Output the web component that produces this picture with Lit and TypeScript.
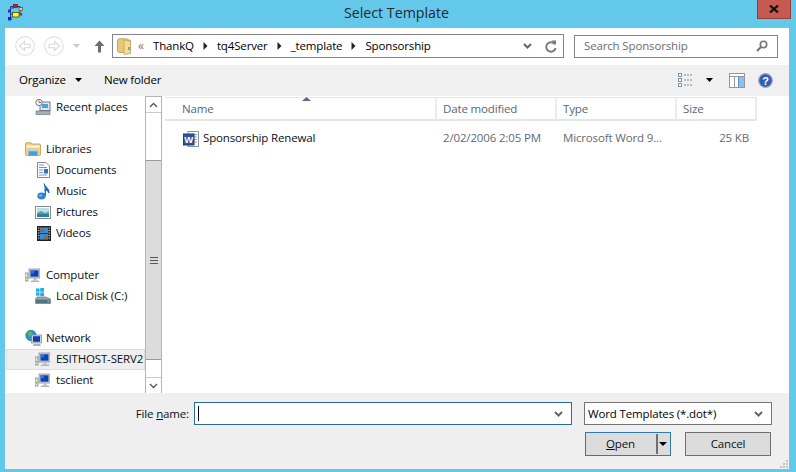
import { LitElement, html, css, svg } from "lit";
import { customElement } from "lit/decorators.js";

const ic = (w: number, h: number, body: unknown, cls = "") =>
  html`<svg class="ic ${cls}" width=${w} height=${h} viewBox="0 0 ${w} ${h}">${body}</svg>`;

const appIcon = ic(16, 17, svg`
  <path d="M7 2.5H3.5V14.5M7 4H4M4 10H8M13 7V10M9 2.5H13V5" fill="none" stroke="#1f3f8f" stroke-width="1"/>
  <rect x="6.5" y="0.5" width="4" height="3" fill="#e01010" stroke="#501010" stroke-width=".6"/>
  <rect x="12" y="3.5" width="3.4" height="3" fill="#f2e020" stroke="#333" stroke-width=".6"/>
  <rect x="5.5" y="8.5" width="6.5" height="4.5" fill="#ffff00" stroke="#333" stroke-width=".7"/>
  <rect x="1" y="5.5" width="3" height="3" fill="#1f2fc0"/>
  <rect x="1" y="13" width="3.4" height="3.4" fill="#1020c8"/>
  <rect x="12.5" y="9" width="2.6" height="2.6" fill="#d01818"/>`);

const navCircle = (flip: boolean) => ic(20, 20, svg`
  <circle cx="10" cy="10" r="9.3" fill="#fff" stroke="#e2e2e2" stroke-width="1.2"/>
  <path d="${flip ? "M5 8.3H10.5V5.5L15.5 10L10.5 14.5V11.7H5Z" : "M15 8.3H9.5V5.5L4.5 10L9.5 14.5V11.7H15Z"}" fill="#fff" stroke="#d9d9d9" stroke-width="1.1"/>`);

const folderTall = ic(14, 17, svg`
  <path d="M0.5 3C0.5 1.5 1.5 .8 3 .8H9L13.5 2.5V14.5H3C1.5 14.5 .5 14 .5 12.5Z" fill="#e5c878" stroke="#b89a4c" stroke-width=".8"/>
  <path d="M7 2.2L13.5 3.2V15.5L7 16.5Z" fill="#f2dc97" stroke="#c4a65a" stroke-width=".8"/>
  <rect x="11" y="9" width="2" height="3" fill="#6aa5d8"/>`);

const crumbArrow = ic(5, 8, svg`<path d="M0.5 0L4.5 4L0.5 8Z" fill="#222"/>`);

const chevron = (c = "#666") => ic(9, 6, svg`<path d="M1 1L4.5 4.5L8 1" fill="none" stroke="${c}" stroke-width="2"/>`);

const refresh = ic(12, 13, svg`<path d="M9.8 4.2A4.7 4.7 0 1 0 10.6 8" fill="none" stroke="#7a7a7a" stroke-width="1.9"/><path d="M6.6 0.5L11 .5V5Z" fill="#7a7a7a"/>`);

const magnifier = ic(12, 12, svg`<circle cx="7.5" cy="4.5" r="3.2" fill="none" stroke="#777" stroke-width="1.6"/><path d="M5 7L1 11" stroke="#777" stroke-width="2.2"/>`);

const upArrow = ic(11, 13, svg`<path d="M5.5 0.5L10.5 6H7V12.5H4V6H.5Z" fill="#6d6d6d"/>`);

const caret = (w = 7, c = "#000") => ic(w, 4, svg`<path d="M0 0H${w}L${w / 2} 4Z" fill="${c}"/>`);

const viewIcon = ic(15, 14, svg`
  <g fill="#fff" stroke="#8294a8" stroke-width="1">
    <rect x=".5" y=".5" width="3" height="3"/><rect x=".5" y="5.5" width="3" height="3"/><rect x=".5" y="10.5" width="3" height="3"/>
  </g>
  <path d="M6 2H15M6 7H15M6 12H15" stroke="#7a8794" stroke-width="1" stroke-dasharray="2 1"/>`);

const paneIcon = ic(16, 15, svg`
  <rect x=".5" y=".5" width="15" height="14" fill="#fff" stroke="#8f98a0"/>
  <path d="M.5 3.5H15.5M5.5 3.5V14.5" stroke="#8f98a0" fill="none"/>
  <rect x="9" y="4" width="6" height="10" fill="#8cc0ee"/>
  <rect x="9" y="4" width="1" height="10" fill="#5d8fc0"/>`);

const helpIcon = ic(15, 15, svg`
  <circle cx="7.5" cy="7.5" r="6.8" fill="#2f5fb8" stroke="#9aa6b8" stroke-width="1.2"/>
  <text x="7.5" y="11.5" text-anchor="middle" font-family="Liberation Sans" font-weight="700" font-size="11" fill="#fff">?</text>`);

const recent = ic(16, 16, svg`
  <rect x="5" y="3" width="10" height="8.5" fill="#dfe6ee" stroke="#6e7a88"/>
  <rect x="7" y="5" width="6" height="4" fill="#5b9bd5"/>
  <circle cx="4" cy="3.5" r="3.2" fill="#f4f4f4" stroke="#777"/>
  <path d="M4 1.5V3.5H6" stroke="#555" fill="none" stroke-width=".8"/>
  <rect x="1" y="12" width="14" height="3.5" fill="#a9b0b8" stroke="#6e7a88" stroke-width=".7"/>`);

const libraries = ic(16, 14, svg`
  <path d="M.5 3V12.5C.5 13.2 1 13.5 1.5 13.5H14.5C15.2 13.5 15.5 13 15.5 12.5V3C15.5 2.3 15 2 14.5 2H7L6 .8H1.5C1 .8 .5 1.2 .5 2Z" fill="#eed28a" stroke="#bfa35a" stroke-width=".9"/>
  <rect x="1.5" y="3.5" width="13" height="2" fill="#fff5d0"/>
  <path d="M3.5 13.5V9.5C3.5 8.5 4 8 5 8H11C12 8 12.5 8.5 12.5 9.5V13.5Z" fill="#4f9bd9"/>
  <rect x="3.5" y="7.3" width="9" height="2" fill="#a9d6f5"/>`);

const documents = ic(13, 16, svg`
  <path d="M.5 .5H9L12.5 4V15.5H.5Z" fill="#fff" stroke="#7f8a99"/>
  <path d="M2 3H7M2 5.5H10M2 8H6M2 10.5H6M2 13H10" stroke="#7b95bd" stroke-width="1"/>
  <rect x="7" y="7" width="4" height="4.5" fill="#2f72b8"/>`);

const music = ic(13, 17, svg`
  <path d="M7 0.5C7.5 4 12.5 5 12 10C11.5 7.5 9.5 6.8 8.3 6.6V13" fill="#2a78c2" stroke="#1f67ad" stroke-width="1.2"/>
  <ellipse cx="4.5" cy="13" rx="4.2" ry="3.4" fill="#2e86d4"/>
  <ellipse cx="3.5" cy="12.4" rx="1.6" ry="1" fill="#7fc0ee"/>`);

const pictures = ic(16, 13, svg`
  <rect x=".5" y=".5" width="15" height="12" fill="#fff" stroke="#85898e"/>
  <rect x="2" y="2" width="12" height="9" fill="#bcdcef"/>
  <path d="M2 7L6 5L10 7L14 5.5V8H2Z" fill="#6aa36a"/>
  <rect x="2" y="8" width="12" height="3" fill="#2a7db5"/>`);

const videos = ic(14, 15, svg`
  <rect x=".5" y=".5" width="13" height="14" fill="#23363f" stroke="#1a1f22"/>
  <rect x="3" y="1.5" width="8" height="5.5" fill="#3b8dd8"/>
  <rect x="3" y="8" width="8" height="5.5" fill="#3b8dd8"/>
  <path d="M3 4L6 2L8 6H3ZM6 13L9 9L11 13Z" fill="#8a6a40"/>
  <path d="M1.2 2H2.3M1.2 4.5H2.3M1.2 7H2.3M1.2 9.5H2.3M1.2 12H2.3M11.7 2H12.8M11.7 4.5H12.8M11.7 7H12.8M11.7 9.5H12.8M11.7 12H12.8" stroke="#e8e8e8" stroke-width="1.1"/>`);

const pc = ic(15, 14, svg`
  <rect x="0" y="5" width="3" height="8" fill="#dfe3da" stroke="#708070" stroke-width=".7"/>
  <rect x=".8" y="9" width="1.4" height="1.4" fill="#56b848"/>
  <rect x="4" y="1" width="11" height="9" fill="#ccd3da" stroke="#7f8790" stroke-width=".7"/>
  <rect x="5.5" y="2.3" width="8" height="6.4" fill="#123fb0"/>
  <rect x="5.5" y="2.3" width="3.5" height="3" fill="#2c7ae0"/>
  <path d="M6.5 12.5H13.5L14.5 14H5.5Z" fill="#aab2ba"/><rect x="8.5" y="10" width="3" height="2.5" fill="#b8c0c8"/>`);

const disk = ic(16, 16, svg`
  <rect x="1" y="0.5" width="3.6" height="3.3" fill="#19b1ef"/><rect x="5.2" y="0" width="3.8" height="3.8" fill="#19b1ef"/>
  <rect x="1" y="4.4" width="3.6" height="3.3" fill="#19b1ef"/><rect x="5.2" y="4.4" width="3.8" height="3.8" fill="#19b1ef"/>
  <path d="M2 9H11L15.5 11V15.5H.5V11Z" fill="#9ca6ae" stroke="#6e7780" stroke-width=".7"/>
  <rect x="1" y="11.5" width="14" height="3.5" fill="#4e7488"/>
  <rect x="12.5" y="12.5" width="1.6" height="1.4" fill="#7fe05a"/>`);

const network = ic(17, 16, svg`
  <circle cx="6" cy="5.5" r="5.2" fill="#2e97c8" stroke="#1a6f98" stroke-width=".7"/>
  <path d="M3 2.5L6.5 1.5L7 4.5L4 6.5ZM6 8L9 6.5L8 10Z" fill="#6dbb45"/>
  <rect x="6.5" y="5" width="10" height="8" fill="#ccd3da" stroke="#7f8790" stroke-width=".7"/>
  <rect x="8" y="6.2" width="7" height="5.6" fill="#123fb0"/>
  <path d="M8.5 14H15L16 16H8Z" fill="#aab2ba"/>`);

const word = ic(16, 16, svg`
  <rect x="5" y=".5" width="10.5" height="15" fill="#fff" stroke="#8a96a8"/>
  <path d="M11 3.5H14M11 6H14M11 8.5H14M11 11H14" stroke="#8aa0c8"/>
  <rect x=".5" y="3" width="10.5" height="11" fill="#2a579a" stroke="#1c3f78"/>
  <text x="5.7" y="12" text-anchor="middle" font-family="Liberation Sans" font-weight="700" font-size="9.5" fill="#fff">W</text>`);

const grip = ic(8, 8, svg`<g fill="#c4c4c4"><rect x="6" y="0" width="2" height="2"/><rect x="3" y="3" width="2" height="2"/><rect x="6" y="3" width="2" height="2"/><rect x="0" y="6" width="2" height="2"/><rect x="3" y="6" width="2" height="2"/><rect x="6" y="6" width="2" height="2"/></g>`);

type Row = { icon?: unknown; label?: string; level?: number; sel?: boolean; narrow?: boolean };
const tree: Row[] = [
  { icon: recent, label: "Recent places", level: 1 },
  {},
  { icon: libraries, label: "Libraries", level: 0 },
  { icon: documents, label: "Documents", level: 1, narrow: true },
  { icon: music, label: "Music", level: 1, narrow: true },
  { icon: pictures, label: "Pictures", level: 1 },
  { icon: videos, label: "Videos", level: 1, narrow: true },
  {},
  { icon: pc, label: "Computer", level: 0 },
  { icon: disk, label: "Local Disk (C:)", level: 1 },
  {},
  { icon: network, label: "Network", level: 0 },
  { icon: pc, label: "ESITHOST-SERV2", level: 1, sel: true },
  { icon: pc, label: "tsclient", level: 1 },
];

@customElement("app-root")
export class AppRoot extends LitElement {
  static styles = css`
    :host {
      display: block; width: 796px; height: 472px; overflow: hidden; position: relative;
      background: #63c8ea; color: #000;
      font: 11.5px/16px "Open Sans", "Noto Sans", sans-serif; letter-spacing: -0.15px;
    }
    * { box-sizing: border-box; }
    .ic { display: block; flex: none; }
    .title { height: 28px; display: flex; align-items: center; justify-content: center; font-size: 14.2px; letter-spacing: 0; padding: 0 3px 3px 0; color: #1c2a30; }
    .appicon { position: absolute; left: 7px; top: 4px; }
    .close { position: absolute; left: 757px; top: 0; width: 34px; height: 19px; background: #c75a50; border: 1px solid #8e4038; border-top: 0; display: flex; align-items: center; justify-content: center; }
    .client { margin: 0 7px 3px 5px; height: 441px; background: #fff; display: flex; flex-direction: column; }

    .nav { height: 37px; flex: none; display: flex; align-items: center; padding: 0 11px 1px 10px; }
    .navback { margin-right: 9px; }
    .navdrop { margin: 0 0 0 9px; }
    .navup { margin: 0 7px 0 14px; }
    .addr { width: 452px; height: 24px; border: 1px solid #848484; display: flex; align-items: center; padding-left: 4px; margin-right: 10px; }
    .chev { color: #777; margin: 0 6px 0 7px; letter-spacing: -1px; font-size: 12px; width: 9px; }
    .crumb { margin-right: 9px; padding-bottom: 1px; }
    .sep { margin-right: 9px; }
    .addr .end { margin-left: auto; display: flex; align-items: center; gap: 13px; padding-right: 6px; }
    .search { width: 204px; height: 23px; border: 1px solid #848484; display: flex; align-items: center; justify-content: space-between; padding: 0 9px; color: #6d6d6d; }

    .tools { height: 31px; flex: none; background: #f0f0f0; display: flex; align-items: center; padding: 0 16px 1px 14px; }
    .tools .org { display: flex; align-items: center; gap: 9px; margin-right: 22px; }
    .tools .right { margin-left: auto; display: flex; align-items: center; }
    .tools .right .c1 { margin: 0 16px 0 13px; }
    .tools .right .c2 { margin-right: 13px; }

    .main { height: 297px; flex: none; display: flex; }
    .side { width: 140px; flex: none; padding: 1px 0 0 0; overflow: hidden; }
    .row { height: 21px; display: flex; align-items: center; white-space: nowrap; color: #0a1020; border: 1px solid transparent; margin-left: 1px; width: 139px; overflow: hidden; padding-bottom: 1px; }
    .row.sel { background: #efefef; border-color: #dedede; }
    .slot { width: 21px; flex: none; display: flex; justify-content: flex-start; }
    .slot.narrow { padding-left: 2px; }
    .l0 { padding-left: 18px; }
    .l1 { padding-left: 28px; }
    .bar { width: 17px; flex: none; border: 1px solid #b5b5b5; border-width: 1px 1px 0; display: flex; flex-direction: column; background: #fff; }
    .bbtn { height: 16px; flex: none; display: flex; align-items: center; justify-content: center; border-bottom: 1px solid #c8c8c8; }
    .bbtn.dn { border-top: 1px solid #c8c8c8; border-bottom: 0; }
    .gap1 { height: 47px; flex: none; }
    .gap2 { flex: 1; }
    .thumb { height: 200px; flex: none; background: #dcdcdc; border: solid #9b9b9b; border-width: 1px 0; display: flex; align-items: center; justify-content: center; }
    .gr { width: 8px; height: 7px; border: solid #555; border-width: 1px 0; position: relative; }
    .gr::after { content: ""; position: absolute; left: 0; right: 0; top: 2px; height: 1px; background: #555; }

    .list { flex: 1; padding: 1px 32px 0 3px; color: #5f6a76; position: relative; }
    .cols { display: grid; grid-template-columns: 272px 120px 120px 80px; height: 24px; border: solid #e6e6e6; border-width: 1px 0 2px; color: #55677c; }
    .cols > div { padding: 1px 0 0 6px; border-right: 2px solid #ececec; line-height: 19px; }
    .cols > div:first-child { padding-left: 17px; }
    .sort { position: absolute; left: 140px; top: 1px; }
    .file { display: grid; grid-template-columns: 272px 120px 120px 80px; height: 34px; align-items: center; }
    .file .nm { display: flex; align-items: center; gap: 4px; padding-left: 18px; color: #0a1020; }
    .file .nm .ic { margin-top: 1px; }
    .file .d { padding-left: 6px; white-space: nowrap; }
    .file .s { text-align: right; padding-right: 8px; }

    .foot { flex: 1; background: #efefef; padding: 9px 17px 0 0; position: relative; }
    .f1 { display: flex; justify-content: flex-end; align-items: center; height: 23px; }
    .f1 label { margin-right: 5px; color: #0a1020; }
    u { text-underline-offset: 1px; }
    .fin { width: 378px; height: 23px; border: 1px solid #2b6a9c; background: #fff; margin-right: 12px; display: flex; align-items: center; justify-content: space-between; padding: 0 8px 0 3px; }
    .cursor { width: 1px; height: 15px; background: #000; }
    .sel2 { width: 188px; height: 23px; border: 1px solid #757575; background: #fff; display: flex; align-items: center; justify-content: space-between; padding: 0 8px 0 3px; white-space: nowrap; }
    .f2 { display: flex; justify-content: flex-end; gap: 14px; margin-top: 7px; padding-right: 1px; }
    .btn { width: 86px; height: 24px; background: #dcdcdc; border: 1px solid #707070; display: flex; align-items: center; justify-content: center; color: #0a1020; }
    .btn.def { border-color: #2f79ad; position: relative; padding-right: 15px; }
    .split { position: absolute; right: 12px; top: 1px; bottom: 1px; width: 2px; background: #707070; }
    .dcar { position: absolute; right: 3px; top: 9px; }
    .grip { position: absolute; right: 1px; bottom: 1px; }
  `;

  render() {
    return html`
      <div class="title">Select Template</div>
      <div class="appicon">${appIcon}</div>
      <div class="close">
        <svg width="10" height="8" viewBox="0 0 10 8"><path d="M1 0.5L9 7.5M9 0.5L1 7.5" stroke="#111" stroke-width="2.2"/></svg>
      </div>
      <div class="client">
        <div class="nav">
          <span class="navback">${navCircle(false)}</span>
          ${navCircle(true)}
          <span class="navdrop">${caret(7, "#c9c9c9")}</span>
          <span class="navup">${upArrow}</span>
          <div class="addr">
            ${folderTall}
            <span class="chev">«</span>
            <span class="crumb">ThankQ</span><span class="sep">${crumbArrow}</span>
            <span class="crumb">tq4Server</span><span class="sep">${crumbArrow}</span>
            <span class="crumb">_template</span><span class="sep">${crumbArrow}</span>
            <span class="crumb">Sponsorship</span>
            <span class="end">${chevron()}${refresh}</span>
          </div>
          <div class="search"><span>Search Sponsorship</span>${magnifier}</div>
        </div>
        <div class="tools">
          <span class="org">Organize ${caret()}</span>
          <span>New folder</span>
          <span class="right">
            ${viewIcon}<span class="c1">${caret()}</span><span class="c2">${paneIcon}</span>${helpIcon}
          </span>
        </div>
        <div class="main">
          <div class="side">
            ${tree.map((r) => r.label
              ? html`<div class="row l${r.level} ${r.sel ? "sel" : ""}"><span class="slot ${r.narrow ? "narrow" : ""}">${r.icon}</span><span>${r.label}</span></div>`
              : html`<div class="row"></div>`)}
          </div>
          <div class="bar">
            <div class="bbtn"><svg width="9" height="6" viewBox="0 0 9 6"><path d="M1 5L4.5 1.5L8 5" fill="none" stroke="#555" stroke-width="1.3"/></svg></div>
            <div class="gap1"></div>
            <div class="thumb"><div class="gr"></div></div>
            <div class="gap2"></div>
            <div class="bbtn dn"><svg width="9" height="6" viewBox="0 0 9 6"><path d="M1 1L4.5 4.5L8 1" fill="none" stroke="#555" stroke-width="1.3"/></svg></div>
          </div>
          <div class="list">
            <div class="sort">${ic(9, 4, svg`<path d="M0 4L4.5 0L9 4Z" fill="#5a6b80"/>`)}</div>
            <div class="cols"><div>Name</div><div>Date modified</div><div>Type</div><div>Size</div></div>
            <div class="file">
              <div class="nm">${word}<span>Sponsorship Renewal</span></div>
              <div class="d">2/02/2006 2:05 PM</div>
              <div class="d">Microsoft Word 9...</div>
              <div class="s">25 KB</div>
            </div>
          </div>
        </div>
        <div class="foot">
          <div class="f1">
            <label>File <u>n</u>ame:</label>
            <div class="fin"><span class="cursor"></span>${chevron()}</div>
            <div class="sel2"><span>Word Templates (*.dot*)</span>${chevron()}</div>
          </div>
          <div class="f2">
            <div class="btn def"><span><u>O</u>pen</span><span class="split"></span><span class="dcar">${caret(8)}</span></div>
            <div class="btn">Cancel</div>
          </div>
          <div class="grip">${grip}</div>
        </div>
      </div>
    `;
  }
}
